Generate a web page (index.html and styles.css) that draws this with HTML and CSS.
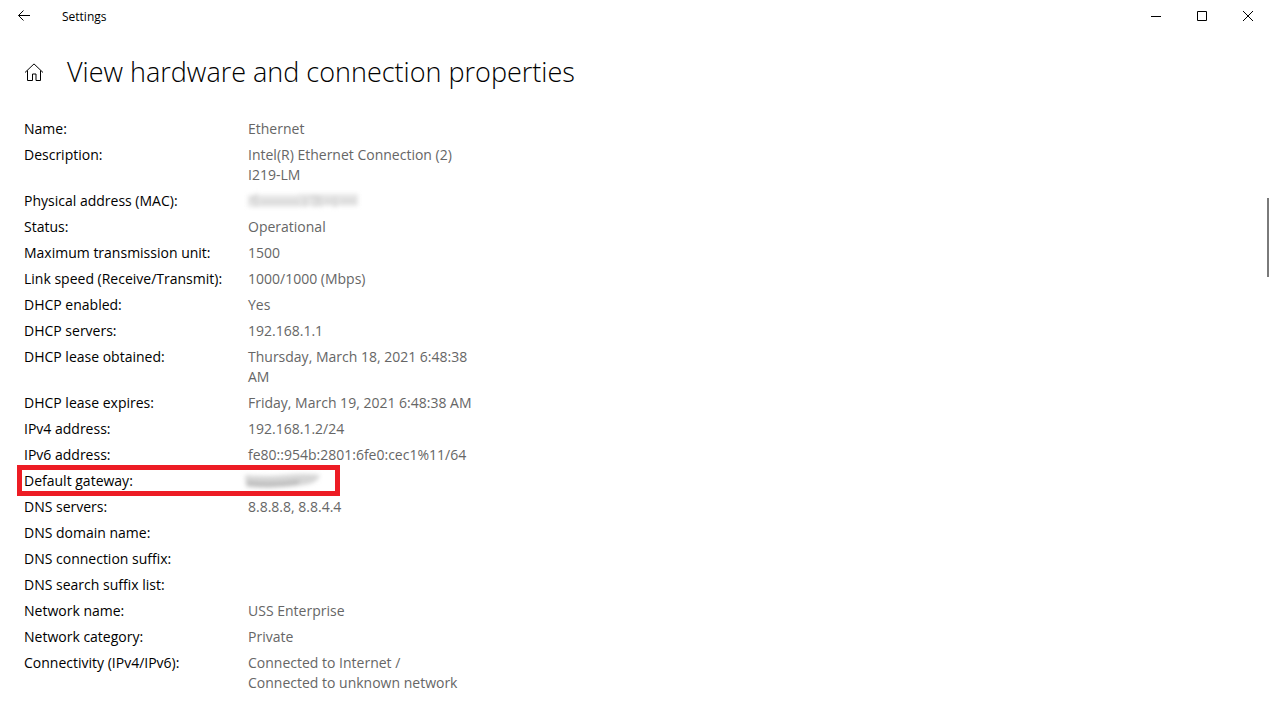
FILE: index.html
```html
<!DOCTYPE html>
<html lang="en">
<head>
    <meta charset="UTF-8">
    <meta name="viewport" content="width=device-width, initial-scale=1.0">
    <title>Settings</title>
    <link rel="stylesheet" href="styles.css">
</head>
<body>
    <header class="titlebar">
        <button class="back" type="button" aria-label="Back">
            <svg width="12" height="12" viewBox="0 0 12 12"><path d="M5.500 .5 .5 5.500l5 5M.5 5.500H12"/></svg>
        </button>
        <span class="app-name">Settings</span>
        <div class="window-buttons">
            <button type="button" aria-label="Minimize">
                <svg width="10" height="10" viewBox="0 0 10 10"><path d="M0 5.500h10"/></svg>
            </button>
            <button type="button" aria-label="Maximize">
                <svg width="10" height="10" viewBox="0 0 10 10"><path d="M.5 .5h9v9h-9z"/></svg>
            </button>
            <button type="button" aria-label="Close">
                <svg width="10" height="10" viewBox="0 0 10 10"><path d="M0 0l10 10M10 0L0 10"/></svg>
            </button>
        </div>
    </header>

    <main class="content">
        <div class="heading">
            <button class="home" type="button" aria-label="Home">
                <svg width="20" height="18" viewBox="0 0 20 18"><path d="M1 9.500 10 .9l9 8.600M3.500 7.500v10H8.500v-6.500h3.500v6.500h4.500V7.500"/></svg>
            </button>
            <h1>View hardware and connection properties</h1>
        </div>

        <dl class="properties">
            <div class="row"><dt>Name:</dt><dd>Ethernet</dd></div>
            <div class="row"><dt>Description:</dt><dd>Intel(R) Ethernet Connection (2) I219-LM</dd></div>
            <div class="row">
                <dt>Physical address (MAC):</dt>
                <dd>
                    <svg class="hidden-value mac" width="112" height="20" viewBox="0 0 112 20">
                        <path class="smear" d="M0 10h54M50 9h60"/>
                        <path d="M2 10 8 5v11M12 11h40M57 6v10M62 6h8l-4 10M72 6v10M76 10h8M87 6v10M92 10h16"/>
                    </svg>
                </dd>
            </div>
            <div class="row"><dt>Status:</dt><dd>Operational</dd></div>
            <div class="row"><dt>Maximum transmission unit:</dt><dd>1500</dd></div>
            <div class="row"><dt>Link speed (Receive/Transmit):</dt><dd>1000/1000 (Mbps)</dd></div>
            <div class="row"><dt>DHCP enabled:</dt><dd>Yes</dd></div>
            <div class="row"><dt>DHCP servers:</dt><dd>192.168.1.1</dd></div>
            <div class="row"><dt>DHCP lease obtained:</dt><dd>Thursday, March 18, 2021 6:48:38 AM</dd></div>
            <div class="row"><dt>DHCP lease expires:</dt><dd>Friday, March 19, 2021 6:48:38 AM</dd></div>
            <div class="row"><dt>IPv4 address:</dt><dd>192.168.1.2/24</dd></div>
            <div class="row"><dt>IPv6 address:</dt><dd>fe80::954b:2801:6fe0:cec1%11/64</dd></div>
            <div class="row highlight">
                <dt>Default gateway:</dt>
                <dd>
                    <svg class="hidden-value gateway" width="76" height="20" viewBox="0 0 76 20">
                        <path d="M-3 4q20 2 40 0t35 0q-2 8-16 10-28 5-58 2z"/>
                        <path class="dark" d="M-1 12q24 3 52-1"/>
                    </svg>
                </dd>
            </div>
            <div class="row"><dt>DNS servers:</dt><dd>8.8.8.8, 8.8.4.4</dd></div>
            <div class="row"><dt>DNS domain name:</dt><dd></dd></div>
            <div class="row"><dt>DNS connection suffix:</dt><dd></dd></div>
            <div class="row"><dt>DNS search suffix list:</dt><dd></dd></div>
            <div class="row"><dt>Network name:</dt><dd>USS Enterprise</dd></div>
            <div class="row"><dt>Network category:</dt><dd>Private</dd></div>
            <div class="row"><dt>Connectivity (IPv4/IPv6):</dt><dd>Connected to Internet /<br>Connected to unknown network</dd></div>
        </dl>
    </main>
    <div class="scroll-thumb"></div>
</body>
</html>
```
FILE: styles.css
```css
body {
    margin: 0;
    background-color: #fff;
    color: #000;
    font-family: "Open Sans", "Noto Sans", sans-serif;
    font-size: 14px;
    line-height: 20px;
}

button {
    display: flex;
    align-items: center;
    justify-content: center;
    padding: 0;
    border: none;
    background: none;
}

svg {
    display: block;
    fill: none;
    stroke: #000;
}

.titlebar {
    display: flex;
    align-items: center;
    height: 32px;
}

.back {
    width: 48px;
    height: 32px;
}

.app-name {
    margin-left: 14px;
    padding-top: 2px;
    font-size: 12px;
}

.window-buttons {
    display: flex;
    margin-left: auto;
}

.window-buttons button {
    width: 46px;
    height: 32px;
}

.content {
    padding: 20px 24px;
}

.heading {
    display: flex;
    align-items: center;
    gap: 23px;
    margin-bottom: 27px;
}

h1 {
    margin: 0;
    font-size: 27px;
    font-weight: 300;
    line-height: 40px;
}

.properties {
    display: flex;
    flex-direction: column;
    gap: 6px;
    margin: 0;
}

.row {
    display: grid;
    grid-template-columns: 224px 232px;
    position: relative;
}

dt {
    white-space: nowrap;
}

dd {
    margin: 0;
    color: #666;
}

.highlight::after {
    content: "";
    position: absolute;
    top: -6px;
    left: -7px;
    width: 313px;
    height: 21px;
    border: 5px solid #ed1c24;
}

/* Private values are smudged out */
.hidden-value {
    overflow: visible;
}

.mac {
    stroke: #d8d8d8;
    stroke-width: 3;
    filter: blur(2px);
}

.mac .smear {
    stroke: #e6e6e6;
    stroke-width: 12;
}

.gateway {
    fill: #d6d6d6;
    stroke: none;
    filter: blur(2px);
}

.gateway .dark {
    fill: none;
    stroke: #b4b4b4;
    stroke-width: 3;
}

.scroll-thumb {
    position: fixed;
    top: 198px;
    right: 2px;
    width: 2px;
    height: 79px;
    background-color: #7a7a7a;
}
```
